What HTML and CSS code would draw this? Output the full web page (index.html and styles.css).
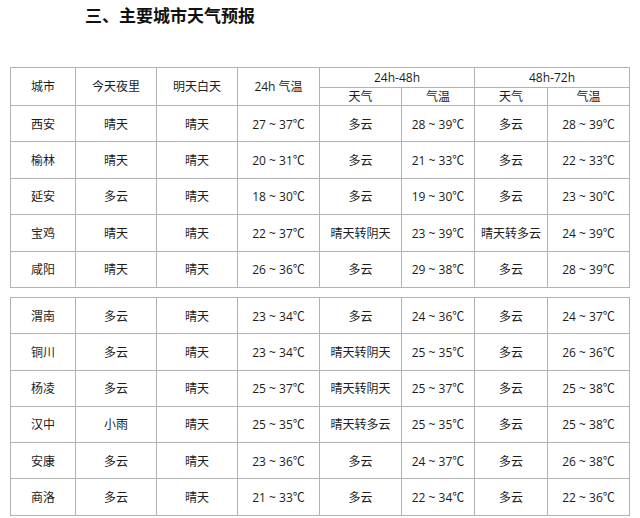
FILE: index.html
```html
<!DOCTYPE html>
<html lang="zh-CN">
<head>
<meta charset="utf-8">
<title>主要城市天气预报</title>
<link rel="stylesheet" href="styles.css">
</head>
<body>
<div class="page">
  <h1 class="title">三、主要城市天气预报</h1>
  <table class="wx wx-top">
    <colgroup>
      <col class="c-city"><col class="c-w"><col class="c-w"><col class="c-t"><col class="c-t"><col class="c-s"><col class="c-s"><col class="c-t">
    </colgroup>
    <thead>
      <tr class="h1">
        <th rowspan="2">城市</th>
        <th rowspan="2">今天夜里</th>
        <th rowspan="2">明天白天</th>
        <th rowspan="2" class="dk">24h 气温</th>
        <th colspan="2">24h-48h</th>
        <th colspan="2">48h-72h</th>
      </tr>
      <tr class="h2">
        <th>天气</th>
        <th class="dk">气温</th>
        <th>天气</th>
        <th class="dk">气温</th>
      </tr>
    </thead>
    <tbody>
      <tr><td>西安</td><td>晴天</td><td>晴天</td><td class="dk">27 ~ 37℃</td><td>多云</td><td class="dk">28 ~ 39℃</td><td>多云</td><td class="dk">28 ~ 39℃</td></tr>
      <tr><td>榆林</td><td>晴天</td><td>晴天</td><td class="dk">20 ~ 31℃</td><td>多云</td><td class="dk">21 ~ 33℃</td><td>多云</td><td class="dk">22 ~ 33℃</td></tr>
      <tr><td>延安</td><td>多云</td><td>晴天</td><td class="dk">18 ~ 30℃</td><td>多云</td><td class="dk">19 ~ 30℃</td><td>多云</td><td class="dk">23 ~ 30℃</td></tr>
      <tr><td>宝鸡</td><td>晴天</td><td>晴天</td><td class="dk">22 ~ 37℃</td><td>晴天转阴天</td><td class="dk">23 ~ 39℃</td><td>晴天转多云</td><td class="dk">24 ~ 39℃</td></tr>
      <tr><td>咸阳</td><td>晴天</td><td>晴天</td><td class="dk">26 ~ 36℃</td><td>多云</td><td class="dk">29 ~ 38℃</td><td>多云</td><td class="dk">28 ~ 39℃</td></tr>
    </tbody>
  </table>
  <table class="wx wx-bottom">
    <colgroup>
      <col class="c-city"><col class="c-w"><col class="c-w"><col class="c-t"><col class="c-t"><col class="c-s"><col class="c-s"><col class="c-t">
    </colgroup>
    <tbody>
      <tr><td>渭南</td><td>多云</td><td>晴天</td><td class="dk">23 ~ 34℃</td><td>多云</td><td class="dk">24 ~ 36℃</td><td>多云</td><td class="dk">24 ~ 37℃</td></tr>
      <tr><td>铜川</td><td>多云</td><td>晴天</td><td class="dk">23 ~ 34℃</td><td>晴天转阴天</td><td class="dk">25 ~ 35℃</td><td>多云</td><td class="dk">26 ~ 36℃</td></tr>
      <tr><td>杨凌</td><td>多云</td><td>晴天</td><td class="dk">25 ~ 37℃</td><td>晴天转阴天</td><td class="dk">25 ~ 37℃</td><td>多云</td><td class="dk">25 ~ 38℃</td></tr>
      <tr><td>汉中</td><td>小雨</td><td>晴天</td><td class="dk">25 ~ 35℃</td><td>晴天转多云</td><td class="dk">25 ~ 35℃</td><td>多云</td><td class="dk">25 ~ 38℃</td></tr>
      <tr><td>安康</td><td>多云</td><td>晴天</td><td class="dk">23 ~ 36℃</td><td>多云</td><td class="dk">24 ~ 37℃</td><td>多云</td><td class="dk">26 ~ 38℃</td></tr>
      <tr><td>商洛</td><td>多云</td><td>晴天</td><td class="dk">21 ~ 33℃</td><td>多云</td><td class="dk">22 ~ 34℃</td><td>多云</td><td class="dk">22 ~ 36℃</td></tr>
    </tbody>
  </table>
</div>
</body>
</html>
```

FILE: styles.css
```css
html, body {
  margin: 0;
  padding: 0;
  background: #ffffff;
}

.page {
  width: 640px;
  height: 518px;
  overflow: hidden;
  padding-left: 10px;
  box-sizing: border-box;
  font-family: "Open Sans", "Noto Sans CJK SC", sans-serif;
  color: #1c1c1c;
}

.title {
  margin: 0 0 37px 75px;
  height: 30px;
  line-height: 30px;
  font-size: 17px;
  font-weight: bold;
  color: #111111;
  font-family: "Noto Sans CJK SC", sans-serif;
}

.wx {
  border-collapse: collapse;
  table-layout: fixed;
  width: 619px;
  font-size: 12px;
  font-weight: normal;
}

.wx-bottom {
  margin-top: 9px;
}

.c-city { width: 65px; }
.c-w { width: 81px; }
.c-t { width: 82px; }
.c-s { width: 73px; }

.wx th,
.wx td {
  border: 1px solid #b2b2b2;
  padding: 0;
  text-align: center;
  vertical-align: middle;
  font-weight: normal;
  white-space: nowrap;
}

.wx .dk {
  border-left-color: #8a8a8a;
}

.wx .h1 th {
  height: 19px;
  line-height: 19px;
}

.wx .h2 th {
  height: 17px;
  line-height: 17px;
}

.wx tbody tr {
  height: 36.4px;
}

.wx-bottom tbody tr {
  height: 36.3px;
}
```
